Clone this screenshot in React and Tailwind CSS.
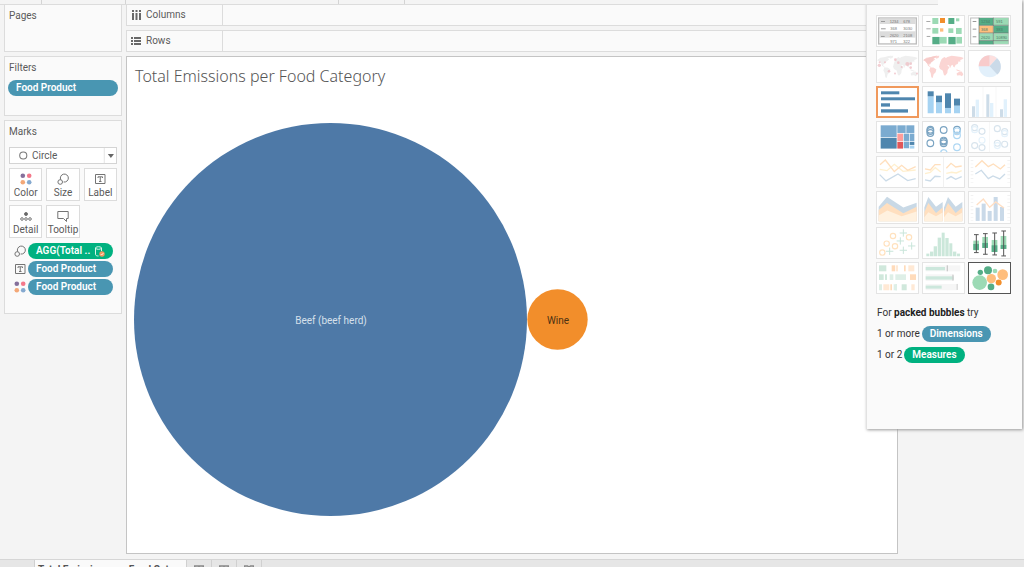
import React from "react";

const BLUE = "#4f86ae";
const LIGHT = "#a6d3f2";
const GREEN = "#55ad87";
const MINT = "#9cdab5";
const ORANGE = "#f28e2b";
const PEACH = "#ffbe7d";

const R = ({ d, f }) => d.map(([x, y, w, h], i) => <rect key={i} x={x} y={y} width={w} height={h} fill={f} />);
const C = ({ d, f }) => d.map(([x, y, r], i) => <circle key={i} cx={x} cy={y} r={r} fill={f} />);
const O = ({ d, s, r = 9, w = 3.5 }) =>
  d.map(([x, y], i) => <circle key={i} cx={x} cy={y} r={r} fill="none" stroke={s} strokeWidth={w} />);
const L = ({ p, s, w = 4 }) => <polyline points={p} fill="none" stroke={s} strokeWidth={w} />;
const A = ({ p, f }) => <polygon points={p} fill={f} />;
const N = ({ d, f }) =>
  d.map(([x, y, t], i) => (
    <text key={i} x={x} y={y} fontSize="12" fontFamily="Liberation Sans, sans-serif" fill={f}>
      {t}
    </text>
  ));

const World = ({ land }) => (
  <g fill={land}>
    <path d="M5 29l8-6 14-2 10-3 8-1-3 6-8 3 6 2-6 5-6 4-3 6-5 1 4 6 5 2-3 1-8-6-3-8-5-6-6-1z" />
    <path d="M40 18l12-1-2 6-7 3z" />
    <path d="M25 53l9 0 9 5-2 9-6 6-3 11-4-2-2-13-4-7z" />
    <path d="M56 34l3-7 8-6 5 3 4-3 13-4 12 2 16 2 8 3-4 4-6 2 0 6-5-2-3 8-6 2-4 9-4-4-1-5-5 3-2 7-4-8-7-2-7-2-8 2-6 0 1-5z" />
    <path d="M54 42l9-2 11 2 5 8 4 1-6 9-1 9-6 8-4-1-4-14-8-5-3-7z" />
    <path d="M103 58l6 2 8 3-4 2-9-3zM104 70l7-4 8-1 5 8-4 6-6-3-9 1z" />
  </g>
);

const THUMBS = [
  {
    name: "text table",
    art: (
      <>
        <rect x="8" y="9" width="113" height="78" fill="#fff" stroke="#bdbdbd" strokeWidth="4" />
        <R d={[[10, 11, 109, 16], [10, 49, 109, 19]]} f="#dcdcdc" />
        <R d={[[15, 18, 12, 3], [15, 40, 14, 3], [15, 63, 11, 3]]} f="#9a9a9a" />
        <N d={[[41, 24, "1234"], [82, 24, "678"], [43, 45, "368"], [82, 45, "3030"], [41, 66, "2620"], [82, 66, "2108"], [43, 84, "971"], [82, 84, "322"]]} f="#777" />
      </>
    ),
  },
  {
    name: "heat map",
    art: (
      <>
        <R d={[[13, 18, 12, 3], [13, 40, 13, 3], [14, 63, 11, 3]]} f="#a8a8a8" />
        <R d={[[31, 9, 18, 18], [102, 10, 10, 9], [31, 39, 18, 17], [79, 40, 15, 14], [102, 39, 17, 18], [54, 66, 20, 20], [103, 66, 17, 20]]} f={MINT} />
        <R d={[[79, 9, 18, 18], [31, 66, 22, 22], [79, 66, 22, 22]]} f={GREEN} />
        <R d={[[54, 9, 15, 15]]} f={ORANGE} />
        <R d={[[54, 40, 10, 10]]} f={PEACH} />
      </>
    ),
  },
  {
    name: "highlight table",
    art: (
      <>
        <rect x="8" y="9" width="113" height="78" fill="#fff" stroke="#bdbdbd" strokeWidth="3" />
        <R d={[[33, 9, 43, 22], [77, 32, 44, 22], [33, 78, 43, 10]]} f={GREEN} />
        <R d={[[77, 9, 44, 22], [33, 55, 43, 22], [77, 55, 44, 22], [77, 78, 44, 9]]} f={MINT} />
        <R d={[[33, 32, 43, 22]]} f={PEACH} />
        <path d="M33 8v80M76 8v80M33 31h88M33 54h88M33 77h88" stroke="#65736b" strokeWidth="2" />
        <R d={[[14, 18, 11, 3], [14, 41, 11, 3], [14, 64, 11, 3]]} f="#999" />
        <N d={[[39, 24, "1234"], [84, 24, "591"], [39, 48, "368"], [84, 48, "383"], [39, 71, "2620"], [84, 71, "10890"]]} f="#4c7b65" />
      </>
    ),
  },
  {
    name: "symbol map",
    art: (
      <>
        <World land="#efefef" />
        <g opacity=".75">
          <C d={[[10, 46, 5], [27, 37, 3], [39, 64, 4], [58, 29, 4], [67, 38, 4], [94, 42, 6], [104, 53, 4], [57, 71, 3], [123, 71, 3], [104, 41, 4], [77, 51, 3], [11, 37, 3]]} f="#f0bfc5" />
        </g>
      </>
    ),
  },
  { name: "filled map", art: <><World land="#fbd5d3" /><path d="M5 29l22-8 18-4-11 9-1 6-9 8-8 1-5-6z" fill="#f6cbc9" /></> },
  {
    name: "pie chart",
    art: (
      <>
        <circle cx="65" cy="49" r="33" fill="#e2f0fb" />
        <path d="M65 49L32 49A33 33 0 0 1 65 16z" fill="#f8cbcb" />
        <path d="M65 49V16A33 33 0 0 1 87 25z" fill="#fde0df" />
        <path d="M65 49L87 25A33 33 0 0 1 88 74z" fill="#cbdae8" />
      </>
    ),
  },
  { name: "horizontal bars", art: <R d={[[15, 16, 55, 9], [15, 34, 102, 9], [15, 52, 27, 10], [15, 70, 81, 10]]} f={BLUE} /> },
  {
    name: "stacked bars",
    art: (
      <>
        <R d={[[17, 31, 18, 51], [42, 49, 18, 33], [69, 65, 18, 17], [96, 59, 18, 23]]} f={LIGHT} />
        <R d={[[17, 16, 18, 15], [42, 29, 18, 20], [69, 22, 18, 44], [96, 38, 18, 21]]} f={BLUE} />
      </>
    ),
  },
  {
    name: "side-by-side bars",
    art: (
      <>
        <R d={[[44, 3, 2, 91], [83, 3, 2, 91]]} f="#f3f3f3" />
        <R d={[[12, 61, 9, 32], [55, 25, 9, 68], [96, 70, 9, 23]]} f="#cddce8" />
        <R d={[[23, 41, 10, 52], [66, 51, 10, 42], [107, 40, 10, 53]]} f="#e1f1fc" />
      </>
    ),
  },
  {
    name: "treemap",
    art: (
      <>
        <R d={[[14, 13, 48, 36], [64, 13, 25, 23], [91, 13, 24, 23], [83, 38, 16, 22], [101, 38, 14, 23], [83, 62, 16, 20]]} f="#7babd0" />
        <R d={[[14, 51, 48, 32], [101, 63, 14, 9]]} f={BLUE} />
        <R d={[[101, 74, 14, 9]]} f={LIGHT} />
        <R d={[[64, 38, 17, 23]]} f="#ff9d9a" />
        <R d={[[64, 63, 17, 20]]} f="#e15759" />
      </>
    ),
  },
  {
    name: "circle views",
    art: (
      <>
        <O d={[[25, 26], [25, 36], [25, 67], [65, 27], [65, 59], [65, 67], [105, 26]]} s="#7ba4c2" r={10} />
        <O d={[[25, 30], [65, 62]]} s="#7ba4c2" r={10} />
        <O d={[[105, 31], [105, 43], [105, 79]]} s="#aed7f3" r={10} />
        <path d="M56 93a10 10 0 0 1 19 0" fill="none" stroke="#aed7f3" strokeWidth="4" />
      </>
    ),
  },
  {
    name: "side-by-side circles",
    art: (
      <>
        <R d={[[64, 3, 2, 91]]} f="#f3f3f3" />
        <O d={[[20, 20], [42, 31], [20, 74], [42, 80], [88, 23], [110, 32], [88, 67], [110, 70]]} s="#d8e4ed" />
        <O d={[[20, 26], [42, 58], [110, 38], [88, 74]]} s="#e5f2fb" />
      </>
    ),
  },
  { name: "continuous lines", art: <><L p="11,40 33,44 55,25 81,46 119,42" s="#fff0cf" /><L p="12,26 28,12 55,47 77,28 95,43 119,32" s="#ffdfbd" /><L p="11,56 30,75 66,54 95,74 119,68" s="#cbdbe8" /></> },
  { name: "discrete lines", art: <><R d={[[63, 3, 3, 91]]} f="#f1f1f1" /><L p="9,53 25,49 40,35 56,48" s="#fff0cf" /><L p="9,39 25,42 39,26 56,26" s="#ffdfbd" /><L p="9,72 25,75 39,61 56,62" s="#cbdbe8" /><L p="73,52 89,49 103,51 119,44" s="#fff0cf" /><L p="73,37 87,22 101,33 119,30" s="#ffdfbd" /><L p="73,70 87,62 101,70 119,62" s="#cbdbe8" /></> },
  {
    name: "dual lines",
    art: (
      <>
        <path d="M12 12v74M122 12v74" stroke="#ededed" strokeWidth="8" strokeDasharray="2 9" />
        <L p="22,33 42,14 61,32 76,24 97,39 111,26" s="#ffdfbd" />
        <L p="22,54 40,43 61,68 75,60 95,69 111,54" s="#cbdbe8" />
      </>
    ),
  },
  { name: "continuous area", art: <><A p="8,47 33,17 82,50 122,35 122,91 8,91" f="#c9d9e6" /><A p="8,57 33,36 82,67 122,47 122,91 8,91" f="#ffdfbf" /><A p="8,74 34,59 77,76 122,62 122,91 8,91" f="#fff1df" /></> },
  { name: "discrete area", art: <><A p="7,50 19,18 42,47 62,33 62,91 7,91" f="#c9d9e6" /><A p="7,63 19,36 42,66 62,50 62,91 7,91" f="#ffdfbf" /><A p="7,79 19,64 42,76 62,65 62,91 7,91" f="#fff1df" /><A p="66,50 78,18 101,47 121,33 121,91 66,91" f="#c9d9e6" /><A p="66,63 78,36 101,66 121,50 121,91 66,91" f="#ffdfbf" /><A p="66,79 78,64 101,76 121,65 121,91 66,91" f="#fff1df" /></> },
  {
    name: "dual combination",
    art: (
      <>
        <path d="M12 12v78M122 12v78" stroke="#ededed" strokeWidth="8" strokeDasharray="2 9" />
        <R d={[[23, 50, 12, 40], [41, 38, 12, 52], [59, 60, 12, 30], [77, 18, 12, 72], [96, 48, 12, 42]]} f="#c9d9e8" />
        <L p="26,42 46,24 65,49 83,33 108,51" s="#ffdfc4" />
      </>
    ),
  },
  {
    name: "scatter plot",
    art: (
      <>
        <O d={[[51, 27], [99, 31], [32, 50], [57, 58], [19, 77]]} s="#ffe2bf" r={8} />
        <path d="M82 7v22M71 18h22M73 31v22M62 42h22M107 46v22M96 57h22M82 59v22M71 70h22M41 62v22M30 73h22" stroke="#c9e5da" strokeWidth="3" />
      </>
    ),
  },
  { name: "histogram", art: <R d={[[13, 80, 9, 8], [24, 74, 10, 14], [35, 58, 10, 30], [47, 32, 10, 56], [59, 17, 9, 71], [70, 33, 10, 55], [82, 49, 9, 39], [93, 74, 10, 14], [105, 80, 9, 8]]} f="#cbe7da" /> },
  {
    name: "box-and-whisker plot",
    art: (
      <>
        <R d={[[16, 41, 17, 29], [43, 30, 17, 33], [71, 39, 17, 36], [98, 27, 17, 39]]} f={MINT} />
        <R d={[[16, 51, 17, 18], [43, 48, 17, 15], [71, 55, 17, 20], [98, 54, 17, 12]]} f={GREEN} />
        <path d="M25 23v54M18 23h14M18 77h14M52 20v62M45 20h14M45 82h14M80 18v66M73 18h14M73 84h14M107 12v75M100 12h14M100 87h14" stroke="#555" strokeWidth="3" />
      </>
    ),
  },
  {
    name: "Gantt view",
    art: (
      <>
        <R d={[[9, 10, 22, 18], [9, 37, 14, 17], [27, 37, 6, 17], [58, 67, 5, 18], [77, 67, 15, 18]]} f="#d0e8dc" />
        <R d={[[41, 37, 11, 17], [58, 37, 32, 17], [9, 67, 9, 18], [53, 67, 10, 18]]} f="#deefe7" />
        <R d={[[47, 10, 10, 18], [102, 37, 18, 17], [84, 10, 5, 18], [43, 67, 5, 18]]} f="#ffdbba" />
        <R d={[[59, 10, 7, 18], [97, 10, 18, 18], [22, 67, 18, 18], [106, 67, 10, 18]]} f="#ffe9d5" />
      </>
    ),
  },
  {
    name: "bullet graph",
    art: (
      <>
        <R d={[[11, 10, 104, 18], [11, 37, 82, 20], [11, 66, 94, 19]]} f="#f6f6f6" />
        <R d={[[11, 15, 58, 10], [11, 43, 84, 10], [11, 71, 48, 9]]} f="#cce7dc" />
        <R d={[[74, 10, 4, 18], [91, 38, 4, 18], [104, 66, 3, 18]]} f="#cbcbcb" />
      </>
    ),
  },
  {
    name: "packed bubbles",
    art: (
      <>
        <C d={[[35, 62, 22], [81, 27, 7]]} f={MINT} />
        <C d={[[37, 31, 8], [60, 25, 12], [69, 75, 10]]} f={GREEN} />
        <C d={[[70, 50, 14], [104, 38, 16]]} f={PEACH} />
        <C d={[[92, 62, 9]]} f={ORANGE} />
      </>
    ),
  },
];

function Thumb({ name, art, index }) {
  const ring =
    index === 6
      ? "ring-2 ring-[#f0995c]"
      : index === 23
        ? "ring-1 ring-[#555555]"
        : "ring-1 ring-[#e4e4e4]";
  return (
    <button type="button" aria-label={name} className={`block min-h-0 bg-white ring-inset ${ring}`}>
      <svg viewBox="0 0 129 97" preserveAspectRatio="none" className="block h-full w-full">
        {art}
      </svg>
    </button>
  );
}

const ColorIcon = () => (
  <svg viewBox="0 0 12 12" className="h-3 w-3">
    <circle cx="2.8" cy="2.8" r="2.3" fill="#85709b" />
    <circle cx="9.2" cy="2.8" r="2.3" fill="#f4788a" />
    <circle cx="2.8" cy="9.2" r="2.3" fill="#f3a878" />
    <circle cx="9.2" cy="9.2" r="2.3" fill="#85a9cf" />
  </svg>
);
const SizeIcon = () => (
  <svg viewBox="0 0 12 12" className="h-3 w-3" fill="none" stroke="#747474">
    <path d="M3.7 6.7A4 4 0 1 1 6.6 9" />
    <circle cx="3.2" cy="9" r="2.3" />
  </svg>
);
const LabelIcon = () => (
  <svg viewBox="0 0 12 12" className="h-3 w-3" fill="none" stroke="#747474">
    <path d="M1.500 1.500h9.500v9H1.500zM4 5V3.800h4.500V5M6.250 4v4.500M5 8.500h2.500" />
  </svg>
);
const DetailIcon = () => (
  <svg viewBox="0 0 12 12" className="h-3 w-3" fill="none" stroke="#747474">
    <circle cx="6" cy="4" r="1.500" fill="#666" />
    <circle cx="2" cy="9" r="1.300" />
    <circle cx="6" cy="9" r="1.300" />
    <circle cx="10" cy="9" r="1.300" />
  </svg>
);
const TooltipIcon = () => (
  <svg viewBox="0 0 12 12" className="h-3 w-3" fill="none" stroke="#747474">
    <path d="M.8 1.500h10.400v7H9.500v3l-3-3H.8z" />
  </svg>
);

const MARKS = [
  ["Color", ColorIcon],
  ["Size", SizeIcon],
  ["Label", LabelIcon],
  ["Detail", DetailIcon],
  ["Tooltip", TooltipIcon],
];

function Pill({ green, className = "", children }) {
  return (
    <button
      type="button"
      className={`flex h-4 items-center rounded-full px-2 text-[10px] leading-4 font-semibold whitespace-nowrap text-white ${green ? "bg-[#00b180]" : "bg-[#4996b2]"} ${className}`}
    >
      {children}
    </button>
  );
}

function Card({ title, className = "", children }) {
  return (
    <section className={`border border-[#dcdcdc] bg-[#fafafa] px-[3px] pt-[3px] ${className}`}>
      <h2 className="px-px leading-4">{title}</h2>
      {children}
    </section>
  );
}

function Shelf({ label, icon }) {
  return (
    <div className="flex h-[22px] border border-[#dcdcdc] bg-[#fafafa]">
      <div className="flex w-24 items-center gap-[5px] border-r border-[#dcdcdc] pl-1 leading-4">
        <svg viewBox="0 0 10 10" className="h-[10px] w-[10px]" fill="#686868">
          {icon}
        </svg>
        {label}
      </div>
    </div>
  );
}

export default function App() {
  return (
    <div className="relative flex h-screen flex-col overflow-hidden bg-[#f4f4f4] font-['Roboto',sans-serif] text-[10px] text-[#5a5a5a]">
      <header className="z-20 mr-[86px] flex h-1 shrink-0 bg-[#f4f4f4] shadow-[0_1px_0_#dcdcdc]">
        <div className="w-[42px] border-r border-[#d4d4d4]" />
        <div className="w-[84px] border-r border-[#d4d4d4]" />
        <div className="w-[213px] border-r border-[#d4d4d4]" />
        <div className="w-[66px] border-r border-[#d4d4d4]" />
      </header>

      <main className="mr-[126px] flex min-h-0 flex-1 gap-1 pl-1">
        <aside className="flex w-[118px] shrink-0 flex-col gap-1">
          <Card title="Pages" className="h-12" />
          <Card title="Filters" className="h-[60px]">
            <Pill className="mt-1 w-full">Food Product</Pill>
          </Card>
          <Card title="Marks" className="h-[194px]">
            <div className="px-px pt-[7px]">
              <div className="relative">
                <select
                  aria-label="Mark type"
                  className="block h-[17px] w-full appearance-none border border-[#d4d4d4] bg-white pl-[22px] text-[10px] leading-none"
                >
                  <option>Circle</option>
                </select>
                <svg viewBox="0 0 106 17" preserveAspectRatio="none" className="pointer-events-none absolute inset-0 h-full w-full">
                  <circle cx="14" cy="8.500" r="3.500" fill="none" stroke="#777" />
                  <path d="M93.500 1v15" stroke="#e4e4e4" />
                  <path d="M97 7h6l-3 4z" fill="#666" />
                </svg>
              </div>
              <div className="mt-1 grid grid-cols-3 gap-1">
                {MARKS.map(([name, Icon]) => (
                  <button
                    key={name}
                    type="button"
                    className="flex h-[33px] flex-col items-center justify-between border border-[#dcdcdc] bg-white pt-1 leading-[14px] whitespace-nowrap"
                  >
                    <Icon />
                    {name}
                  </button>
                ))}
              </div>
            </div>
            <ul className="mt-[5px] flex flex-col gap-[2px] pr-[5px] pl-[6px]">
              <li className="flex items-center gap-[2px]">
                <SizeIcon />
                <Pill green className="min-w-0 flex-1 justify-between">
                  AGG(Total ..
                  <svg viewBox="0 0 11 11" className="h-[11px] w-[11px] shrink-0" fill="none" stroke="#d9f6e9">
                    <ellipse cx="4.500" cy="2" rx="3" ry="1.300" />
                    <path d="M1.500 2v6.500c0 1 1.500 1.500 3 1.500M7.500 2v3" />
                    <circle cx="8" cy="8" r="2.700" fill="#f09a62" stroke="none" />
                    <path d="M6.700 8l1 1 1.700-2" stroke="#fff" strokeWidth=".8" />
                  </svg>
                </Pill>
              </li>
              <li className="flex items-center gap-[2px]">
                <LabelIcon />
                <Pill className="flex-1">Food Product</Pill>
              </li>
              <li className="flex items-center gap-[2px]">
                <ColorIcon />
                <Pill className="flex-1">Food Product</Pill>
              </li>
            </ul>
          </Card>
        </aside>

        <div className="flex min-w-0 flex-1 flex-col">
          <div className="flex flex-col gap-1">
            <Shelf
              label="Columns"
              icon={<path d="M1 0h2v2H1zM4.500 0h2v2h-2zM8 0h2v2H8zM1 3h2v7H1zM4.500 3h2v7h-2zM8 3h2v7H8z" />}
            />
            <Shelf
              label="Rows"
              icon={<path d="M0 1h2v2H0zM0 4h2v2H0zM0 7h2v2H0zM3 1h7v2H3zM3 4h7v2H3zM3 7h7v2H3z" />}
            />
          </div>
          <section className="mt-1 mb-[5px] flex min-h-0 flex-1 flex-col border border-[#c4c4c4] bg-white">
            <h1 className="h-9 shrink-0 px-2 pt-[7px] font-['Noto_Sans',sans-serif] text-[16px] leading-6 font-light text-[#555555]">
              Total Emissions per Food Category
            </h1>
            <svg
              viewBox="0 0 770 460"
              role="img"
              aria-label="Total Emissions per Food Category"
              className="min-h-0 w-full flex-1 text-[10px]"
            >
              <circle cx="203.500" cy="226.500" r="196.500" fill="#4e79a7" />
              <circle cx="430.500" cy="226.500" r="30.200" fill="#f28e2b" />
              <text x="204" y="231" textAnchor="middle" fill="#d6e0eb">
                Beef (beef herd)
              </text>
              <text x="431" y="231" textAnchor="middle" fill="#4c3213">
                Wine
              </text>
            </svg>
          </section>
        </div>
      </main>

      <footer className="flex h-2 shrink-0 overflow-hidden border-t border-[#d6d6d6] bg-[#e6e6e6]">
        <div className="w-[35px] shrink-0 border-r border-[#d0d0d0]" />
        <button type="button" className="flex h-6 w-[152px] items-start border-r border-[#d0d0d0] bg-[#fafafa] px-[3px] pt-[3px] leading-[14px] font-bold whitespace-nowrap text-[#555555]">
          Total Emissions per Food Cat..
        </button>
        {["New worksheet", "New dashboard", "New story"].map((name, i) => (
          <button key={name} type="button" aria-label={name} className="flex h-6 w-[25px] justify-center border-r border-[#d0d0d0] pt-[5px]">
            <svg viewBox="0 0 10 10" className="h-[10px] w-[10px]" fill="none" stroke="#888" strokeWidth="1.500">
              {i === 2 ? <path d="M.5 1h3l1.500 1L6.500 1h3v7H.5zM5 2v7" /> : <path d="M.7 1h8.600v7H.7zM5 1v7M.7 4.500h8.600" />}
            </svg>
          </button>
        ))}
      </footer>

      <aside className="absolute top-0 right-[2px] z-10 h-[429px] w-[156px] border-l border-[#e2e2e2] bg-[#fafafa] pt-[15px] pl-[9px] shadow-[1px_1px_3px_#999999]">
        <div className="grid h-[279px] w-[135px] grid-cols-3 grid-rows-8 gap-[3px]">
          {THUMBS.map((t, i) => (
            <Thumb key={t.name} name={t.name} art={t.art} index={i} />
          ))}
        </div>
        <div className="mt-[11px] flex flex-col gap-[5px] pl-px leading-4 text-[#333333]">
          <p>
            For <b className="text-[#222222]">packed bubbles</b> try
          </p>
          <p className="flex items-center gap-[2px]">
            1 or more <Pill>Dimensions</Pill>
          </p>
          <p className="flex items-center gap-[2px]">
            1 or 2 <Pill green>Measures</Pill>
          </p>
        </div>
      </aside>
    </div>
  );
}
